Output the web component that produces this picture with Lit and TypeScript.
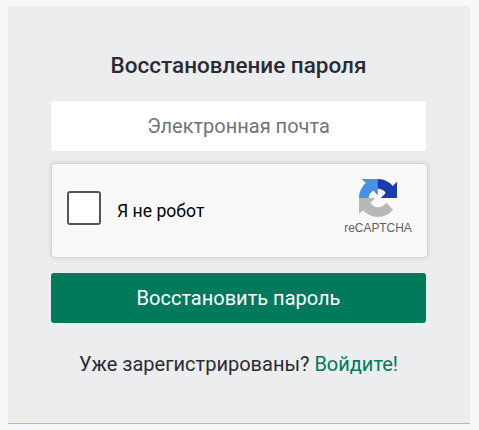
import { LitElement, html, css } from "lit";
import { customElement } from "lit/decorators.js";

@customElement("app-root")
export class AppRoot extends LitElement {
  static styles = css`
    :host { display: block; height: 430px; background: #f7f8fa; font-family: Roboto, "Noto Sans", sans-serif; overflow: hidden; }
    .wrap { padding: 6px 9px 0 8px; }
    .panel { box-sizing: border-box; height: 418px; background: #ecedef; border-bottom: 1px solid #dfb660; padding: 43px 44px 0 43px; display: flex; flex-direction: column; }
    h1 { margin: 0; font-size: 22.5px; line-height: 32px; font-weight: 500; color: #2b2b33; text-align: center; }
    .input { margin-top: 20px; height: 50px; background: #fff; border-radius: 3px; display: flex; align-items: center; justify-content: center; font-size: 20px; color: #6c757d; }
    .captcha { box-sizing: border-box; margin-top: 12px; width: 377px; height: 95px; background: #f9f9f9; border: 1px solid #d3d3d3; border-radius: 4px; box-shadow: 0 0 4px 1px rgba(0,0,0,.08); display: flex; align-items: center; padding-left: 15px; }
    .box { box-sizing: border-box; width: 34px; height: 34px; margin-bottom: 5px; background: #fff; border: 2.5px solid #555; border-radius: 3px; }
    .label { margin-left: 16px; font-size: 17.6px; color: #000; }
    .brand { margin-left: auto; margin-bottom: 8px; width: 80px; margin-right: 9px; display: flex; flex-direction: column; align-items: center; }
    .brand svg { width: 38px; height: 38px; display: block; }
    .brand span { margin-top: 4px; font-size: 11.9px; line-height: 14px; color: #5f5f5f; font-family: "Liberation Sans", Arial, sans-serif; }
    .btn { margin-top: 15px; height: 50px; background: #007a5a; color: #fff; border-radius: 3px; display: flex; align-items: center; justify-content: center; font-size: 20px; }
    .foot { margin-top: 26px; text-align: center; font-size: 20px; line-height: 30px; color: #2b2b33; }
    .foot a { color: #007a5a; text-decoration: none; }
  `;
  render() {
    return html`<div class="wrap"><div class="panel">
      <h1>Восстановление пароля</h1>
      <div class="input">Электронная почта</div>
      <div class="captcha">
        <div class="box"></div>
        <div class="label">Я не робот</div>
        <div class="brand">
          <svg viewBox="0 0 64 64">
            <path d="M64 31.955l-.033-1.37V4.687l-7.16 7.16C50.948 4.674 42.033.093 32.05.093c-10.4 0-19.622 4.96-25.458 12.64l11.736 11.86a15.55 15.55 0 0 1 4.754-5.334c2.05-1.6 4.952-2.906 8.968-2.906.485 0 .86.057 1.135.163 4.976.393 9.29 3.14 11.83 7.125l-8.307 8.307c10.522-.04 22.4-.066 27.295.005" fill="#1c3aa9"/>
            <path d="M31.862.094l-1.37.033H4.594l7.16 7.16C4.58 13.147 0 22.06 0 32.046c0 10.4 4.96 19.622 12.64 25.458L24.5 45.768a15.55 15.55 0 0 1-5.334-4.754c-1.6-2.05-2.906-4.952-2.906-8.968 0-.485.057-.86.163-1.135.393-4.976 3.14-9.29 7.125-11.83l8.307 8.307c-.04-10.522-.066-22.4.005-27.295" fill="#4a90e2"/>
            <path d="M.001 32.045l.033 1.37v25.898l7.16-7.16c5.86 7.173 14.774 11.754 24.76 11.754 10.4 0 19.622-4.96 25.458-12.64l-11.736-11.86a15.55 15.55 0 0 1-4.754 5.334c-2.05 1.6-4.952 2.906-8.968 2.906-.485 0-.86-.057-1.135-.163-4.976-.393-9.29-3.14-11.83-7.125l8.307-8.307c-10.522.04-22.4.066-27.295-.005" fill="#b8b8b8"/>
          </svg>
          <span>reCAPTCHA</span>
        </div>
      </div>
      <div class="btn">Восстановить пароль</div>
      <div class="foot">Уже зарегистрированы? <a href="#">Войдите!</a></div>
    </div></div>`;
  }
}
